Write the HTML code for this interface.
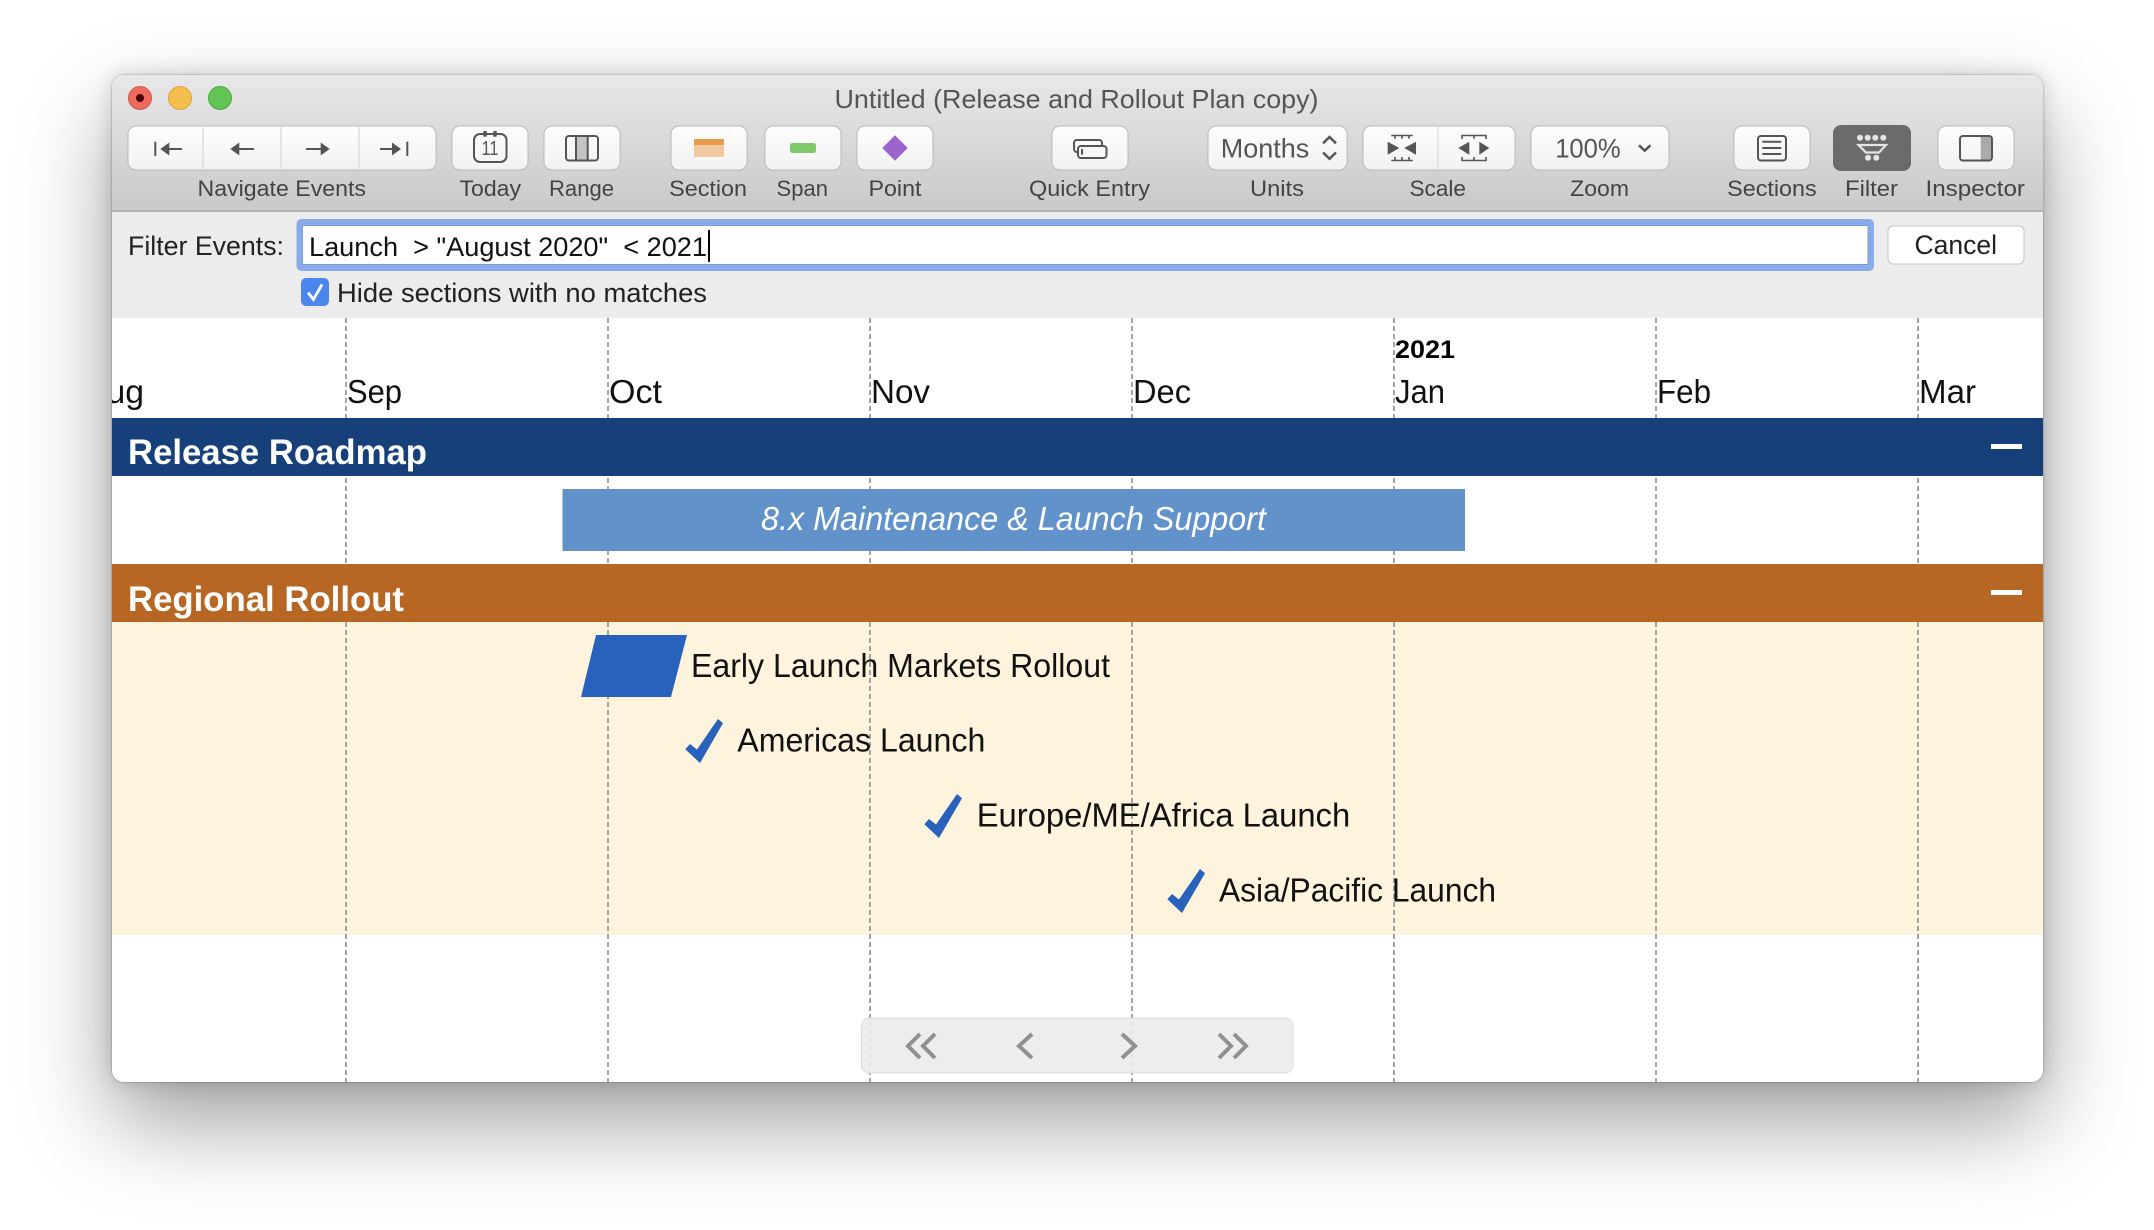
<!DOCTYPE html>
<html><head><meta charset="utf-8"><title>Untitled (Release and Rollout Plan copy)</title>
<style>
html,body{margin:0;padding:0;background:#fff;width:2154px;height:1230px;overflow:hidden}
#w{position:absolute;left:112px;top:75px;width:1931px;height:1007px;border-radius:12px;box-shadow:0 40px 90px rgba(0,0,0,.38),0 0 20px rgba(0,0,0,.16),0 0 2px rgba(0,0,0,.35)}
svg{position:absolute;left:0;top:0}
text{font-family:"Liberation Sans",sans-serif;white-space:pre}
.l{font-size:22.5px;fill:#444}
.g{font-size:33px;fill:#111}
.b{fill:url(#bg);stroke:#b9b9b9;stroke-width:1}
.i{fill:none;stroke:#555;stroke-width:2}
.f{fill:#555}
.c{fill:none;stroke:#909090;stroke-width:4}
</style></head><body>
<div id="w"></div>
<svg width="2154" height="1230" viewBox="0 0 2154 1230" xmlns="http://www.w3.org/2000/svg">
<defs>
<linearGradient id="tb" x1="0" y1="0" x2="0" y2="1"><stop offset="0" stop-color="#e8e8e8"/><stop offset="1" stop-color="#c9c9c9"/></linearGradient>
<linearGradient id="bg" x1="0" y1="0" x2="0" y2="1"><stop offset="0" stop-color="#fdfdfd"/><stop offset="1" stop-color="#f2f2f2"/></linearGradient>
<clipPath id="win"><rect x="112" y="75" width="1931" height="1007" rx="12"/></clipPath>
</defs>
<g clip-path="url(#win)">
<rect x="112" y="75" width="1931" height="1007" fill="#fff"/>
<rect x="112" y="75" width="1931" height="136" fill="url(#tb)"/>
<rect x="112" y="210" width="1931" height="2" fill="#b2b2b2"/>
<rect x="112" y="212" width="1931" height="106" fill="#ececec"/>
<rect x="112" y="622" width="1931" height="313" fill="#fef4dd"/>
<g stroke="#888" stroke-width="1.5" stroke-dasharray="5 3">
<path d="M346 318V1082M608 318V1082M870 318V1082M1132 318V1082M1394 318V1082M1656 318V1082M1918 318V1082"/>
</g>
<text x="84" y="403" class="g" textLength="60" lengthAdjust="spacingAndGlyphs">Aug</text>
<text x="347" y="403" class="g" textLength="55" lengthAdjust="spacingAndGlyphs">Sep</text>
<text x="609" y="403" class="g" textLength="53" lengthAdjust="spacingAndGlyphs">Oct</text>
<text x="871" y="403" class="g" textLength="59" lengthAdjust="spacingAndGlyphs">Nov</text>
<text x="1133" y="403" class="g" textLength="58" lengthAdjust="spacingAndGlyphs">Dec</text>
<text x="1395" y="403" class="g" textLength="50" lengthAdjust="spacingAndGlyphs">Jan</text>
<text x="1657" y="403" class="g" textLength="54" lengthAdjust="spacingAndGlyphs">Feb</text>
<text x="1919" y="403" class="g" textLength="57" lengthAdjust="spacingAndGlyphs">Mar</text>
<text x="1395" y="358" font-size="25" font-weight="700" fill="#000" textLength="60" lengthAdjust="spacingAndGlyphs">2021</text>

<rect x="112" y="418" width="1931" height="58" fill="#173f7a"/>
<text x="128" y="464" font-size="35" font-weight="700" fill="#fff" textLength="299" lengthAdjust="spacingAndGlyphs">Release Roadmap</text>
<rect x="1991" y="444" width="31" height="5" fill="#fff"/>
<rect x="562.5" y="489" width="902.5" height="62" fill="#6192c9"/>
<text x="761" y="530" font-size="33" font-style="italic" fill="#fff" textLength="505" lengthAdjust="spacingAndGlyphs">8.x Maintenance &amp; Launch Support</text>
<rect x="112" y="564" width="1931" height="58" fill="#b86624"/>
<text x="128" y="611" font-size="35" font-weight="700" fill="#fff" textLength="276" lengthAdjust="spacingAndGlyphs">Regional Rollout</text>
<rect x="1991" y="590" width="31" height="5" fill="#fff"/>

<polygon points="596,635 687,635 671,697 581,697" fill="#2962bd"/>
<text x="691" y="677" class="g" textLength="419" lengthAdjust="spacingAndGlyphs">Early Launch Markets Rollout</text>
<polygon points="718,719 723,723.3 700,763 685.3,749.3 690,744 697,749.5" fill="#2962bd"/>
<text x="737.3" y="751.7" class="g" textLength="248" lengthAdjust="spacingAndGlyphs">Americas Launch</text>
<polygon points="957,794 962,798.3 939,838 924.3,824.3 929,819 936,824.5" fill="#2962bd"/>
<text x="976.7" y="826.7" class="g" textLength="373.5" lengthAdjust="spacingAndGlyphs">Europe/ME/Africa Launch</text>
<polygon points="1200,869 1205,873.3 1182,913 1167.3,899.3 1172,894 1179,899.5" fill="#2962bd"/>
<text x="1219" y="901.7" class="g" textLength="277" lengthAdjust="spacingAndGlyphs">Asia/Pacific Launch</text>

<rect x="861.5" y="1018" width="431.5" height="55" rx="8" fill="#ebebeb" fill-opacity=".9" stroke="#dcdcdc" stroke-width="1"/>
<path class="c" d="M920 1034L908 1046L920 1058M935 1034L923 1046L935 1058"/>
<path class="c" d="M1032 1034L1019 1046L1032 1058"/>
<path class="c" d="M1122 1034L1135 1046L1122 1058"/>
<path class="c" d="M1219 1034L1231 1046L1219 1058M1234 1034L1246 1046L1234 1058"/>

<!-- traffic lights -->
<circle cx="140" cy="98" r="11.5" fill="#ed6a5e" stroke="#d65347" stroke-width="1"/>
<circle cx="140" cy="98" r="4" fill="#4c0002"/>
<circle cx="180" cy="98" r="11.5" fill="#f5bf4f" stroke="#d9a33f" stroke-width="1"/>
<circle cx="220" cy="98" r="11.5" fill="#61c454" stroke="#50a840" stroke-width="1"/>
<text x="834.5" y="108" font-size="26" fill="#555" textLength="484" lengthAdjust="spacingAndGlyphs">Untitled (Release and Rollout Plan copy)</text>

<!-- buttons -->
<rect class="b" x="128" y="126" width="308" height="44" rx="8"/>
<path d="M203 127V169M281 127V169M359 127V169" stroke="#dedede" stroke-width="1.5"/>
<rect class="f" x="154.3" y="141.7" width="2" height="14.3"/>
<polygon class="f" points="160.3,149 169.3,142.5 169.3,155.5"/><rect class="f" x="169" y="148" width="13" height="2"/>
<polygon class="f" points="230.3,149 239.3,142.5 239.3,155.5"/><rect class="f" x="239" y="148" width="15" height="2"/>
<polygon class="f" points="329.7,149 320.7,142.5 320.7,155.5"/><rect class="f" x="306" y="148" width="15" height="2"/>
<polygon class="f" points="401,149 392,142.5 392,155.5"/><rect class="f" x="380" y="148" width="12" height="2"/><rect class="f" x="406.3" y="141.7" width="2" height="14.3"/>

<rect class="b" x="452" y="126" width="76" height="44" rx="8"/>
<rect class="i" x="474" y="134" width="32.5" height="28" rx="6"/>
<rect class="f" x="483.3" y="131" width="3.4" height="5.7"/><rect class="f" x="493.3" y="131" width="3.4" height="5.7"/>
<text x="490" y="155" font-size="20" fill="#555" text-anchor="middle" textLength="17" lengthAdjust="spacingAndGlyphs">11</text>

<rect class="b" x="544" y="126" width="76" height="44" rx="8"/>
<rect x="576" y="136" width="11.7" height="24" fill="#c4c4c4"/>
<rect class="i" x="566" y="136" width="32" height="24.5" rx="3"/>
<path class="i" d="M576 136V160M587.7 136V160"/>

<rect class="b" x="671" y="126" width="76" height="44" rx="8"/>
<rect x="694" y="145" width="30" height="12" fill="#f1c9a0"/><rect x="694" y="139" width="30" height="6" fill="#e59c4f"/>

<rect class="b" x="765" y="126" width="76" height="44" rx="8"/>
<rect x="790" y="143" width="26" height="10" rx="2.5" fill="#7fc96a"/>

<rect class="b" x="857" y="126" width="76" height="44" rx="8"/>
<polygon points="895,135.3 907.7,148 895,160.7 882.3,148" fill="#9c64cf"/>

<rect class="b" x="1052" y="126" width="76" height="44" rx="8"/>
<rect class="i" x="1074" y="140" width="28" height="12" rx="3"/>
<rect class="i" x="1078" y="146" width="28.5" height="12" rx="3" style="fill:#f7f7f7"/>
<rect class="f" x="1081" y="149" width="2" height="5.7"/>

<rect class="b" x="1208" y="126" width="139" height="44" rx="8"/>
<text x="1220.8" y="157.3" font-size="27" fill="#555" textLength="88.5" lengthAdjust="spacingAndGlyphs">Months</text>
<path d="M1323 143.3L1329.5 137L1336 143.3M1323 152.5L1329.5 158.8L1336 152.5" fill="none" stroke="#555" stroke-width="2.5"/>

<rect class="b" x="1363" y="126" width="152" height="44" rx="8"/>
<path d="M1438 127V169" stroke="#dedede" stroke-width="1.5"/>
<path d="M1391.3 135.5H1412.7M1395 135.5V138.7M1402 135.5V138.7M1409 135.5V138.7M1391.3 160.5H1412.7M1395 160.5V157M1402 160.5V157M1409 160.5V157" fill="none" stroke="#555" stroke-width="1.6"/>
<polygon class="f" points="1387.7,141.7 1399.3,148 1387.7,154.7"/>
<polygon class="f" points="1416,141.7 1404.3,148 1416,154.7"/>
<path d="M1462 139V135.5H1486V139M1474 135.5V138.7M1462 157V160.5H1486V157M1474 160.5V157" fill="none" stroke="#555" stroke-width="1.6"/>
<polygon class="f" points="1469.3,141.7 1458.3,148 1469.3,154.7"/>
<polygon class="f" points="1479.3,141.7 1489.3,148 1479.3,154.7"/>

<rect class="b" x="1531" y="126" width="138" height="44" rx="8"/>
<text x="1555.2" y="157.3" font-size="27" fill="#555" textLength="65.5" lengthAdjust="spacingAndGlyphs">100%</text>
<path d="M1639 145.3L1644.7 150.7L1650.4 145.3" fill="none" stroke="#555" stroke-width="2.5"/>

<rect class="b" x="1734" y="126" width="76" height="44" rx="8"/>
<rect class="i" x="1758" y="136" width="28" height="24.5" rx="3"/>
<path class="i" d="M1762.3 141.7H1781.3M1762.3 148H1781.3M1762.3 154H1781.3"/>

<rect x="1833" y="125" width="78" height="46" rx="8" fill="#6b6b6b"/>
<g fill="#e5e5e5"><circle cx="1860" cy="137.7" r="3"/><circle cx="1867.7" cy="137.7" r="3"/><circle cx="1875.3" cy="137.7" r="3"/><circle cx="1883.3" cy="137.7" r="3"/><circle cx="1868" cy="157.7" r="3"/><circle cx="1876.3" cy="157.7" r="3"/></g>
<path d="M1858.5 145H1886L1879 152.5H1866Z" fill="none" stroke="#e5e5e5" stroke-width="2.2"/>

<rect class="b" x="1938" y="126" width="76" height="44" rx="8"/>
<rect x="1980.7" y="136" width="11" height="24" fill="#aaa"/>
<rect class="i" x="1960" y="136" width="32" height="24.5" rx="3"/>

<!-- labels -->
<text class="l" x="197.5" y="196" textLength="168.5" lengthAdjust="spacingAndGlyphs">Navigate Events</text>
<text class="l" x="459.5" y="196" textLength="61.5" lengthAdjust="spacingAndGlyphs">Today</text>
<text class="l" x="549" y="196" textLength="65" lengthAdjust="spacingAndGlyphs">Range</text>
<text class="l" x="669.2" y="196" textLength="77.8" lengthAdjust="spacingAndGlyphs">Section</text>
<text class="l" x="776.5" y="196" textLength="51.5" lengthAdjust="spacingAndGlyphs">Span</text>
<text class="l" x="868.5" y="196" textLength="53" lengthAdjust="spacingAndGlyphs">Point</text>
<text class="l" x="1029" y="196" textLength="121" lengthAdjust="spacingAndGlyphs">Quick Entry</text>
<text class="l" x="1250" y="196" textLength="54" lengthAdjust="spacingAndGlyphs">Units</text>
<text class="l" x="1409.5" y="196" textLength="56.5" lengthAdjust="spacingAndGlyphs">Scale</text>
<text class="l" x="1570.2" y="196" textLength="58.8" lengthAdjust="spacingAndGlyphs">Zoom</text>
<text class="l" x="1727.2" y="196" textLength="89.5" lengthAdjust="spacingAndGlyphs">Sections</text>
<text class="l" x="1845" y="196" textLength="53" lengthAdjust="spacingAndGlyphs">Filter</text>
<text class="l" x="1925.5" y="196" textLength="99.5" lengthAdjust="spacingAndGlyphs">Inspector</text>

<!-- filter row -->
<text x="128" y="255" font-size="26.5" fill="#222" textLength="156" lengthAdjust="spacingAndGlyphs">Filter Events:</text>
<rect x="296.5" y="219" width="1577.5" height="52" rx="5" fill="#8aabea"/>
<rect x="302.5" y="225.5" width="1565.5" height="39" fill="#fff" stroke="#7a9ad8" stroke-width="1"/>
<text x="309" y="256" font-size="26.5" fill="#111" xml:space="preserve" textLength="398" lengthAdjust="spacingAndGlyphs">Launch  &gt; "August 2020"  &lt; 2021</text>
<rect x="708" y="230" width="2" height="32" fill="#000"/>
<rect x="301" y="278" width="28" height="28" rx="5" fill="#4a86ee"/>
<path d="M308 292.5L313.5 299.5L322 284.5" fill="none" stroke="#fff" stroke-width="2.8"/>
<text x="337" y="302" font-size="26.5" fill="#222" textLength="370" lengthAdjust="spacingAndGlyphs">Hide sections with no matches</text>
<rect x="1888" y="226" width="136" height="38" rx="5" fill="#fff" stroke="#c4c4c4" stroke-width="1"/>
<text x="1914.5" y="254" font-size="26.5" fill="#222" textLength="82.5" lengthAdjust="spacingAndGlyphs">Cancel</text>
</g>
</svg>
</body></html>
